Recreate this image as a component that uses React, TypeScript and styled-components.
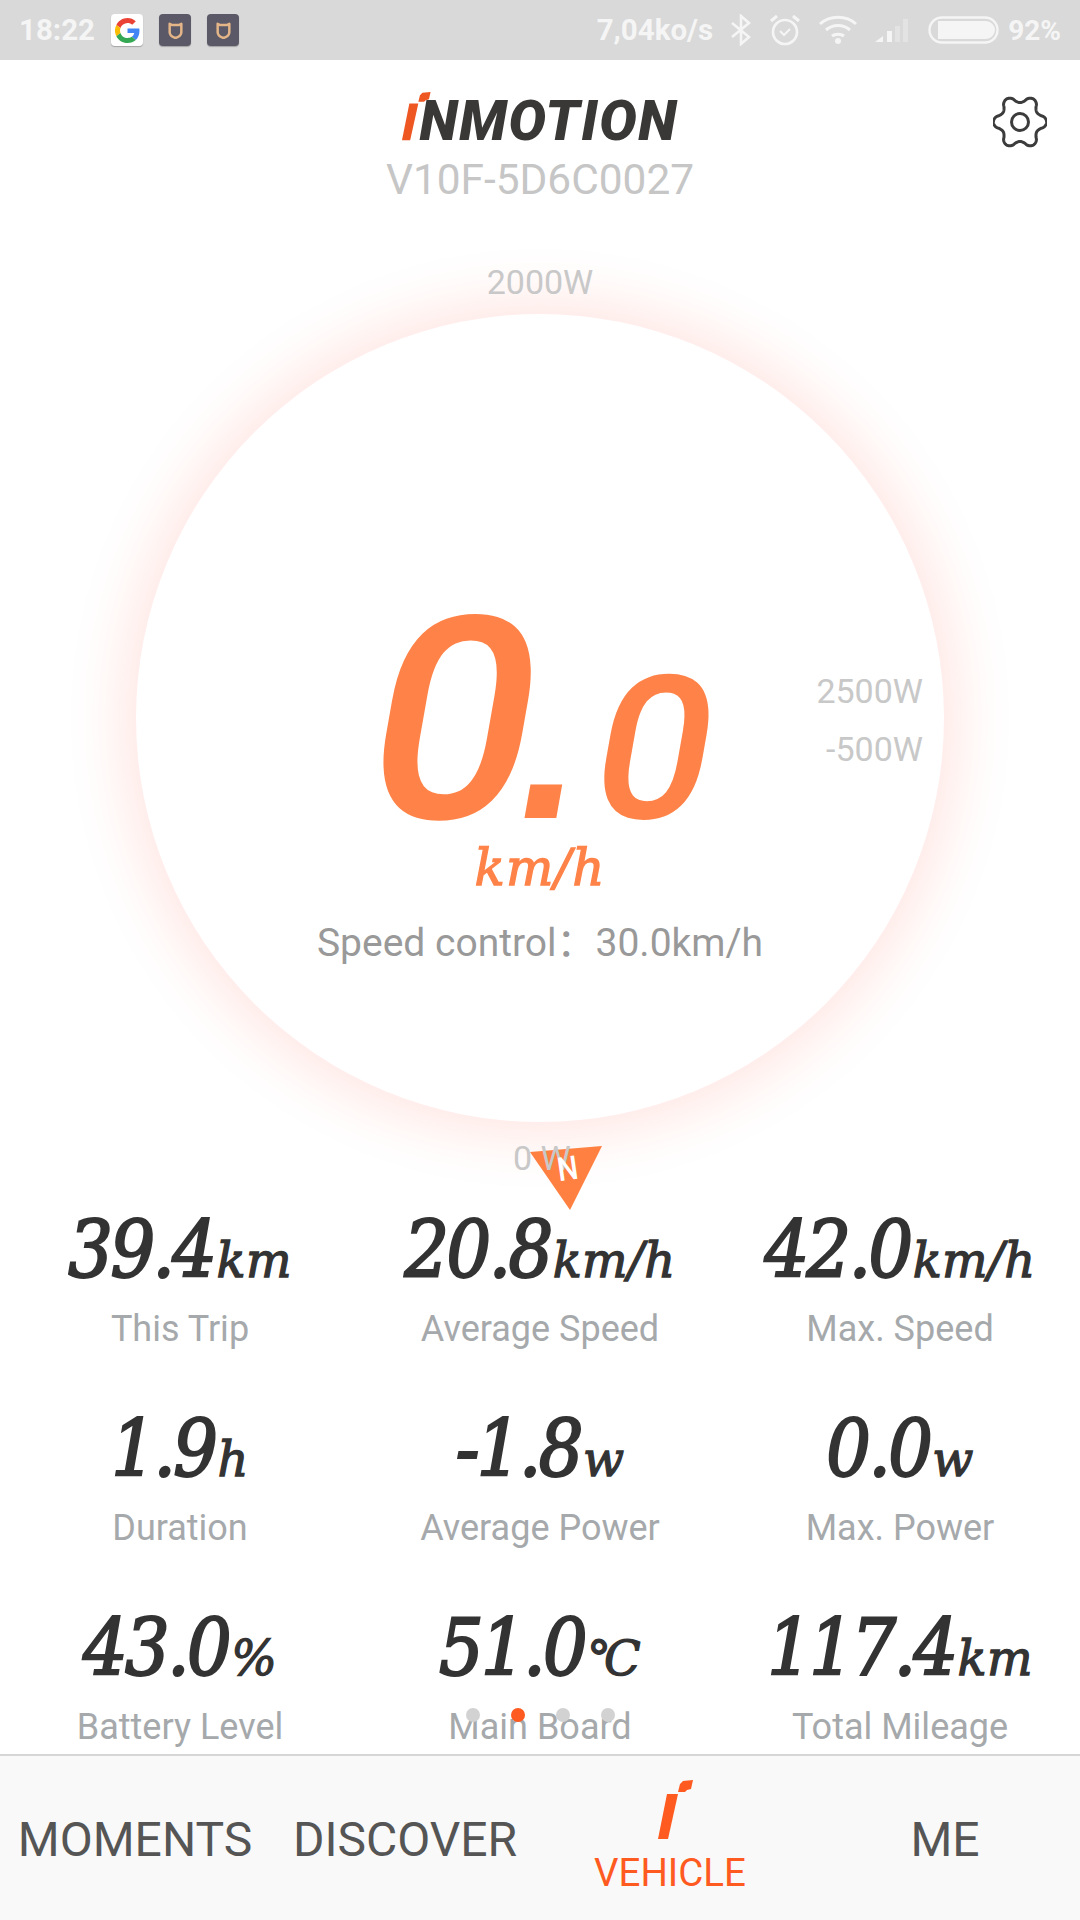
import React from "react";
import styled, { createGlobalStyle } from "styled-components";

const Global = createGlobalStyle`
  html, body { margin: 0; padding: 0; background: #fff; }
  body { font-family: Roboto, "Noto Sans", sans-serif; }
`;

const Page = styled.div`
  width: 1080px;
  height: 1920px;
  display: flex;
  flex-direction: column;
  overflow: hidden;
  position: relative;
  background: #fff;
`;

const StatusBar = styled.div`
  height: 60px;
  flex: none;
  background: #d9d9d9;
  color: #f5f5f5;
  display: flex;
  align-items: center;
  padding: 0 19px;
  box-sizing: border-box;
  font-weight: 700;
  font-size: 29.5px;
`;
const StatusGroup = styled.div`
  display: flex;
  align-items: center;
`;
const Spacer = styled.div`
  flex: 1;
`;
const Tile = styled.div<{ $bg: string; $gap: number }>`
  width: 32px;
  height: 32px;
  border-radius: 4px;
  margin-left: ${(p) => p.$gap}px;
  background: ${(p) => p.$bg};
  box-shadow: 0 1px 1px rgba(0, 0, 0, 0.25);
  display: flex;
  align-items: center;
  justify-content: center;
`;
const StatusIcon = styled.svg<{ $gap: number }>`
  display: block;
  margin-left: ${(p) => p.$gap}px;
`;
const StatusText = styled.span<{ $gap?: number; $size?: number }>`
  margin-left: ${(p) => p.$gap ?? 0}px;
  font-size: ${(p) => p.$size ?? 29.5}px;
  white-space: nowrap;
`;

const Header = styled.header`
  height: 194px;
  flex: none;
  position: relative;
  display: flex;
  flex-direction: column;
  align-items: center;
  padding-top: 29px;
  box-sizing: border-box;
`;
const LogoRow = styled.div`
  display: flex;
  align-items: flex-end;
  height: 52px;
`;
const LogoText = styled.span`
  font-weight: 900;
  font-style: italic;
  font-size: 56px;
  line-height: 40px;
  height: 39px;
  color: #3a3836;
  letter-spacing: 1.6px;
  margin-left: -11px;
  margin-bottom: 1px;
`;
const Serial = styled.div`
  font-size: 42.4px;
  line-height: 48px;
  color: #c6c6c6;
  margin-top: 15px;
`;
const GearIcon = styled.svg`
  position: absolute;
  right: 33px;
  top: 35px;
`;

const GaugeSection = styled.section`
  flex: none;
  height: 928px;
  padding-top: 60px;
  box-sizing: border-box;
  display: flex;
  justify-content: center;
  align-items: flex-start;
`;
const Dial = styled.div`
  width: 808px;
  height: 808px;
  border-radius: 50%;
  background: #fff;
  position: relative;
  box-shadow: 0 0 55px 14px rgba(255, 90, 60, 0.15);
  display: flex;
  flex-direction: column;
  align-items: center;
`;
const Tick = styled.span`
  position: absolute;
  font-size: 34px;
  line-height: 36px;
  color: #c8c8c8;
  white-space: nowrap;
`;
const TopTick = styled(Tick)`
  top: -50px;
  left: 0;
  right: 0;
  text-align: center;
`;
const BottomTick = styled(Tick)`
  top: 826px;
  left: 377px;
`;
const RightTick = styled(Tick)<{ $top: number }>`
  right: 21px;
  top: ${(p) => p.$top}px;
`;
const Reading = styled.div`
  display: flex;
  align-items: baseline;
  margin-top: 261px;
  height: 292px;
  line-height: 292px;
  color: #ff8348;
  margin-left: 10px;
`;
const BigDigit = styled.span`
  display: inline-block;
  font-size: 283px;
  font-weight: 500;
  margin: 0 -2.5px;
  transform: skewX(-10deg) scaleX(1.03);
`;
const Point = styled.span`
  display: inline-block;
  font-family: "Liberation Sans", Arial, sans-serif;
  font-weight: 700;
  font-size: 225px;
  margin: 0 15.5px 0 -12px;
  transform: skewX(-10deg);
`;
const SmallDigit = styled.span`
  display: inline-block;
  font-size: 200px;
  font-weight: 500;
  margin: 0 -1.5px;
  transform: skewX(-10deg) scaleX(1.03);
`;
const SlabBase = styled.span`
  font-family: "DejaVu Serif Condensed", "DejaVu Serif", serif;
  font-style: italic;
  font-weight: 400;
`;
const SlabWide = styled(SlabBase)`
  font-family: "DejaVu Serif", serif;
`;
const SpeedUnit = styled(SlabWide)`
  color: #ff8348;
  font-size: 50px;
  line-height: 60px;
  letter-spacing: 1px;
  margin-top: -29px;
  -webkit-text-stroke: 1.3px #ff8348;
`;
const SpeedLimit = styled.div`
  font-size: 39px;
  line-height: 44px;
  color: #999;
  margin-top: 23px;
  white-space: nowrap;
  font-family: Roboto, "Noto Sans CJK SC", sans-serif;
`;

const Marker = styled.svg`
  position: absolute;
  left: 394px;
  top: 832px;
`;
const MarkerLetter = styled.span`
  position: absolute;
  left: 420px;
  top: 838px;
  font-size: 33px;
  font-weight: 500;
  line-height: 34px;
  color: #fff;
  transform: rotate(-8deg) scaleX(0.88);
`;

const Stats = styled.section`
  flex: 1;
  min-height: 0;
  padding-top: 27px;
  box-sizing: border-box;
  display: grid;
  grid-template-columns: repeat(3, 360px);
  grid-auto-rows: 139px;
  row-gap: 60px;
  position: relative;
`;
const Stat = styled.div`
  display: flex;
  flex-direction: column;
  align-items: center;
`;
const StatValue = styled.div`
  display: flex;
  align-items: baseline;
  height: 82px;
  line-height: 82px;
  color: #333;
  white-space: nowrap;
`;
const StatNumber = styled(SlabBase)`
  font-size: 78px;
  letter-spacing: -2.5px;
  -webkit-text-stroke: 2.2px #333;
`;
const StatUnit = styled(SlabWide)`
  font-size: 48px;
  letter-spacing: 0.3px;
  margin-left: 2px;
  -webkit-text-stroke: 1.3px #333;
`;
const StatLabel = styled.div`
  font-size: 36px;
  line-height: 36px;
  color: #a6a9ab;
  margin-top: 20px;
  white-space: nowrap;
`;
const Dots = styled.div`
  position: absolute;
  left: 466px;
  top: 526px;
  display: flex;
  gap: 31px;
`;
const Dot = styled.span<{ $on?: boolean }>`
  width: 14px;
  height: 14px;
  border-radius: 50%;
  background: ${(p) => (p.$on ? "#ff5a1f" : "#d2d2d2")};
`;

const Nav = styled.nav`
  flex: none;
  height: 166px;
  box-sizing: border-box;
  background: #f9f9f9;
  border-top: 2px solid #d6d6d6;
  display: grid;
  grid-template-columns: repeat(4, 270px);
`;
const NavItem = styled.div<{ $on?: boolean }>`
  display: flex;
  flex-direction: column;
  align-items: center;
  justify-content: center;
  padding: ${(p) => (p.$on ? "0 0 2px" : "2px 0 0")};
  font-size: ${(p) => (p.$on ? 38.5 : 48)}px;
  color: ${(p) => (p.$on ? "#ff5a1f" : "#555")};
  white-space: nowrap;
  transform: translateX(${(p) => (p.$on ? -5 : 0)}px);
`;
const NavCaption = styled.span`
  line-height: 42px;
  margin-top: 12px;
`;
const NavLogo = styled.div`
  display: flex;
  margin-left: 10px;
`;

const LogoMark = ({ h, color }: { h: number; color: string }) => (
  <svg width={(h * 35) / 60} height={h} viewBox="0 0 35 60">
    <polygon points="0,59 10,59 20,14 9,14" fill={color} />
    <polygon points="25,1 35,0 33,9 29,10 27,12 20,12 22,4" fill={color} />
  </svg>
);

const gearPath = () => {
  const pts: string[] = [];
  for (let i = 0; i < 240; i++) {
    const t = (i / 240) * Math.PI * 2;
    const c = Math.cos(6 * t);
    const r = 23 + 3.6 * Math.sign(c) * Math.pow(Math.abs(c), 0.75);
    pts.push(`${(27 + r * Math.cos(t)).toFixed(2)},${(27 + r * Math.sin(t)).toFixed(2)}`);
  }
  return `M${pts.join("L")}Z`;
};

const MiFace = () => (
  <svg width="15" height="17" viewBox="0 0 18 20" fill="none">
    <path d="M2 2 L5 3.5 H13 L16 2 V12 C16 16 12 18 9 19 C6 18 2 16 2 12 Z" stroke="#e3b587" strokeWidth="3" strokeLinejoin="round" />
  </svg>
);

const GoogleG = () => (
  <svg width="25" height="25" viewBox="0 0 48 48">
    <path fill="#EA4335" d="M24 9.5c3.5 0 6.7 1.3 9.1 3.5l6.8-6.8C35.8 2.4 30.2 0 24 0 14.6 0 6.5 5.4 2.6 13.2l7.9 6.2C12.4 13.6 17.7 9.5 24 9.5z" />
    <path fill="#4285F4" d="M47 24.5c0-1.6-.1-3.1-.4-4.5H24v9h12.9c-.6 3-2.2 5.5-4.7 7.2l7.7 6C44.4 38 47 31.8 47 24.5z" />
    <path fill="#FBBC05" d="M10.5 28.6A14.5 14.5 0 0 1 10.5 19.4l-7.9-6.2a24 24 0 0 0 0 21.6z" />
    <path fill="#34A853" d="M24 48c6.5 0 11.9-2.1 15.9-5.8l-7.7-6c-2.2 1.5-4.9 2.3-8.2 2.3-6.3 0-11.6-4.2-13.5-9.9l-7.9 6.2C6.5 42.6 14.6 48 24 48z" />
  </svg>
);

const stats: [string, string, string][] = [
  ["39.4", "km", "This Trip"],
  ["20.8", "km/h", "Average Speed"],
  ["42.0", "km/h", "Max. Speed"],
  ["1.9", "h", "Duration"],
  ["-1.8", "w", "Average Power"],
  ["0.0", "w", "Max. Power"],
  ["43.0", "%", "Battery Level"],
  ["51.0", "℃", "Main Board"],
  ["117.4", "km", "Total Mileage"],
];

export default function App() {
  return (
    <Page>
      <Global />
      <StatusBar>
        <StatusGroup>
          <StatusText>18:22</StatusText>
          <Tile $bg="#fff" $gap={16}>
            <GoogleG />
          </Tile>
          <Tile $bg="#5b5867" $gap={16}>
            <MiFace />
          </Tile>
          <Tile $bg="#5b5867" $gap={16}>
            <MiFace />
          </Tile>
        </StatusGroup>
        <Spacer />
        <StatusGroup>
          <StatusText>7,04ko/s</StatusText>
          <StatusIcon $gap={18} width="20" height="32" viewBox="0 0 20 32" fill="none" stroke="#f5f5f5" strokeWidth="2.6">
            <path d="M1 9 L18 23 L10 30 V2 L18 9 L1 23" />
          </StatusIcon>
          <StatusIcon $gap={18} width="32" height="32" viewBox="0 0 32 32" fill="none" stroke="#f5f5f5" strokeWidth="2.6">
            <circle cx="16" cy="18" r="12" />
            <path d="M11 17 L15 21 L21 15" strokeWidth="2" />
            <path d="M2 7 L8 2 M30 7 L24 2" strokeWidth="3" />
          </StatusIcon>
          <StatusIcon $gap={18} width="38" height="30" viewBox="0 0 38 30" fill="none" stroke="#f5f5f5" strokeWidth="3">
            <path d="M1 9 C11 0 27 0 37 9" />
            <path d="M7 15 C14 9 24 9 31 15" />
            <path d="M13 21 C16 18.5 22 18.5 25 21" />
            <circle cx="19" cy="26" r="3" fill="#f5f5f5" stroke="none" />
          </StatusIcon>
          <StatusIcon $gap={18} width="37" height="26" viewBox="0 0 37 26">
            <polygon points="0,25 8,25 8,19" fill="#f5f5f5" />
            <rect x="12" y="14" width="5" height="11" fill="#f5f5f5" />
            <rect x="20" y="9" width="5" height="16" fill="#f5f5f5" opacity="0.35" />
            <rect x="28" y="2" width="5" height="23" fill="#f5f5f5" opacity="0.35" />
          </StatusIcon>
          <StatusIcon $gap={16} width="71" height="28" viewBox="0 0 71 28" fill="none">
            <rect x="1.5" y="1.5" width="68" height="25" rx="12.5" stroke="#f5f5f5" strokeWidth="2.4" />
            <path d="M10 5 H58 A9 9 0 0 1 58 23 H10 Z" fill="#f5f5f5" />
          </StatusIcon>
          <StatusText $gap={9} $size={28}>92%</StatusText>
        </StatusGroup>
      </StatusBar>

      <Header>
        <LogoRow>
          <LogoMark h={49} color="#ee5622" />
          <LogoText>NMOTION</LogoText>
        </LogoRow>
        <Serial>V10F-5D6C0027</Serial>
        <GearIcon width="54" height="54" viewBox="0 0 54 54" fill="none" stroke="#3c3c3c" strokeWidth="3">
          <path d={gearPath()} strokeLinejoin="round" />
          <circle cx="27" cy="27" r="8.5" />
        </GearIcon>
      </Header>

      <GaugeSection>
        <Dial>
          <TopTick>2000W</TopTick>
          <RightTick $top={359}>2500W</RightTick>
          <RightTick $top={417}>-500W</RightTick>
          <Reading>
            <BigDigit>0</BigDigit>
            <Point>.</Point>
            <SmallDigit>0</SmallDigit>
          </Reading>
          <SpeedUnit>km/h</SpeedUnit>
          <SpeedLimit>Speed control：30.0km/h</SpeedLimit>
          <Marker width="72" height="66" viewBox="0 0 72 66">
            <polygon points="0,6 72,0 40,64" fill="#ff8040" />
          </Marker>
          <BottomTick>0 W</BottomTick>
          <MarkerLetter>N</MarkerLetter>
        </Dial>
      </GaugeSection>

      <Stats>
        {stats.map(([value, unit, label]) => (
          <Stat key={label}>
            <StatValue>
              <StatNumber>{value}</StatNumber>
              <StatUnit>{unit}</StatUnit>
            </StatValue>
            <StatLabel>{label}</StatLabel>
          </Stat>
        ))}
        <Dots>
          <Dot />
          <Dot $on />
          <Dot />
          <Dot />
        </Dots>
      </Stats>

      <Nav>
        <NavItem>MOMENTS</NavItem>
        <NavItem>DISCOVER</NavItem>
        <NavItem $on>
          <NavLogo>
            <LogoMark h={60} color="#ff5a1f" />
          </NavLogo>
          <NavCaption>VEHICLE</NavCaption>
        </NavItem>
        <NavItem>ME</NavItem>
      </Nav>
    </Page>
  );
}
